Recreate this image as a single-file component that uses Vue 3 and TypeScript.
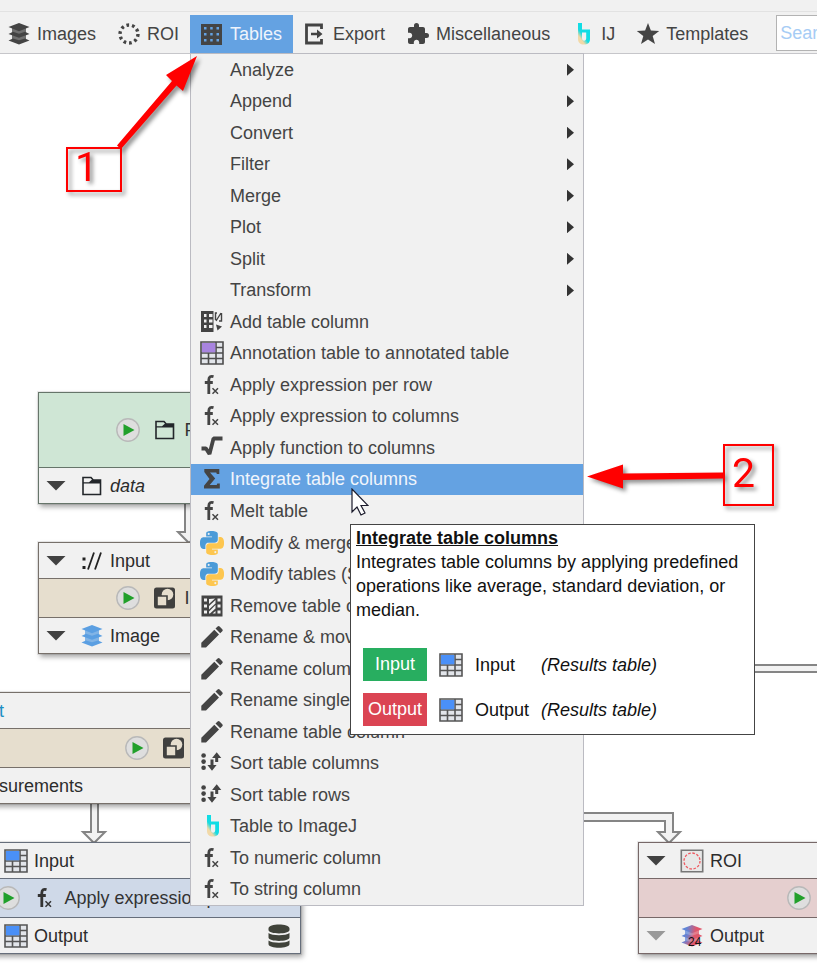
<script setup lang="ts">
import { ref } from 'vue'

interface MenuEntry {
  label: string
  icon?: string
}

interface Slot {
  label: string
  icon: string
  variant?: string
  cached?: boolean
}

interface GraphNode {
  id: string
  title: string
  icon: string
  left: number
  top: number
  width: number
  tone: string
  inputs: Slot[]
  outputs: Slot[]
}

const categories = [
  { label: 'Images', icon: 'layers' },
  { label: 'ROI', icon: 'roi' },
  { label: 'Tables', icon: 'grid' },
  { label: 'Export', icon: 'export' },
  { label: 'Miscellaneous', icon: 'puzzle' },
  { label: 'IJ', icon: 'ij' },
  { label: 'Templates', icon: 'star' },
]

const submenus = ['Analyze', 'Append', 'Convert', 'Filter', 'Merge', 'Plot', 'Split', 'Transform']

const entries: MenuEntry[] = [
  ...submenus.map((label) => ({ label })),
  { label: 'Add table column', icon: 'col-add' },
  { label: 'Annotation table to annotated table', icon: 'table-purple' },
  { label: 'Apply expression per row', icon: 'fx' },
  { label: 'Apply expression to columns', icon: 'fx' },
  { label: 'Apply function to columns', icon: 'sqrt' },
  { label: 'Integrate table columns', icon: 'sigma' },
  { label: 'Melt table', icon: 'fx' },
  { label: 'Modify & merge tables (Script)', icon: 'python' },
  { label: 'Modify tables (Script)', icon: 'python' },
  { label: 'Remove table column', icon: 'col-remove' },
  { label: 'Rename & move columns', icon: 'pencil' },
  { label: 'Rename columns', icon: 'pencil' },
  { label: 'Rename single column', icon: 'pencil' },
  { label: 'Rename table column', icon: 'pencil' },
  { label: 'Sort table columns', icon: 'sort' },
  { label: 'Sort table rows', icon: 'sort' },
  { label: 'Table to ImageJ', icon: 'ij' },
  { label: 'To numeric column', icon: 'fx' },
  { label: 'To string column', icon: 'fx' },
]

const openCategory = ref('Tables')
const selected = ref('Integrate table columns')
const query = ref('')

const nodes: GraphNode[] = [
  { id: 'folder', title: 'Folder', icon: 'folder', left: 38, top: 392, width: 276, tone: 'green', inputs: [], outputs: [{ label: 'data', icon: 'folder', variant: 'italic' }] },
  { id: 'import', title: 'Import image', icon: 'shapes', left: 38, top: 542, width: 330, tone: 'sand', inputs: [{ label: 'Input', icon: 'url' }], outputs: [{ label: 'Image', icon: 'layers-blue' }] },
  { id: 'stats', title: 'Extract statistics', icon: 'shapes', left: -108, top: 692, width: 664, tone: 'sand', inputs: [{ label: 'Input', icon: 'layers-blue', variant: 'linked' }], outputs: [{ label: 'Measurements', icon: 'table-blue' }] },
  { id: 'expr', title: 'Apply expression per row', icon: 'fx', left: -38, top: 842, width: 339, tone: 'blue', inputs: [{ label: 'Input', icon: 'table-blue' }], outputs: [{ label: 'Output', icon: 'table-blue', cached: true }] },
  { id: 'roi', title: 'Filter ROI', icon: 'shapes', left: 638, top: 842, width: 443, tone: 'rose', inputs: [{ label: 'ROI', icon: 'roi-box' }], outputs: [{ label: 'Output', icon: 'layers-24', variant: 'faded' }] },
]

const slots = [
  { kind: 'Input', name: 'Input', type: '(Results table)' },
  { kind: 'Output', name: 'Output', type: '(Results table)' },
]
</script>

<template>
  <div class="app">
    <svg class="defs" aria-hidden="true">
      <defs>
        <linearGradient id="g-ij" x1="0.7" y1="0.1" x2="0.1" y2="0.9">
          <stop offset="0" stop-color="#0adfe8" />
          <stop offset="0.55" stop-color="#17dbe2" />
          <stop offset="0.8" stop-color="#f2d9a8" />
        </linearGradient>
        <linearGradient id="g-24" x1="0" y1="0" x2="1" y2="0.3">
          <stop offset="0.25" stop-color="#5f86d8" />
          <stop offset="0.7" stop-color="#e0566b" />
        </linearGradient>
        <symbol id="layers" viewBox="0 0 24 24">
          <path d="M12 1 22.500 5 12 9.200 1.500 5zM1.500 12l4.500-2.200 6 1.900 6-1.900 4.500 2.200L12 15.800zM1.500 18.600 6 16.400l6 1.900 6-1.900 4.500 2.200L12 22.500z" />
          <path d="M5 6h14v5l-7 2.500L5 11zM5 12.500h14v5L12 20l-7-2.500z" opacity=".75" />
        </symbol>
        <symbol id="roi" viewBox="0 0 24 24">
          <circle cx="12" cy="12" r="9" fill="none" stroke="currentColor" stroke-width="3.400" stroke-dasharray="2.700 2.950" />
        </symbol>
        <symbol id="grid" viewBox="0 0 24 24">
          <path fill-rule="evenodd" d="M1 2h21v21H1zM4 5v2.500h2.500V5zM10.200 5v2.500h2.500V5zM16.500 5v2.500h2.500V5zM4 11v2.500h2.500v-2.500zM10.200 11v2.500h2.500v-2.500zM16.500 11v2.500h2.500v-2.500zM4 17v2.500h2.500v-2.500zM10.200 17v2.500h2.500v-2.500zM16.500 17v2.500h2.500v-2.500z" />
        </symbol>
        <symbol id="export" viewBox="0 0 24 24">
          <path d="M18.500 7V3H3.500v18h15v-4" fill="none" stroke="currentColor" stroke-width="2.800" />
          <path d="M8 10.800h6V7.500l5.500 4.500-5.500 4.500v-3.300H8z" />
        </symbol>
        <symbol id="puzzle" viewBox="0 0 24 24">
          <path d="M20.500 11H19V7c0-1.100-.9-2-2-2h-4V3.500a2.500 2.500 0 0 0-5 0V5H4c-1.100 0-1.990.9-1.990 2v3.800H3.500c1.490 0 2.700 1.210 2.700 2.700s-1.210 2.700-2.700 2.700H2V20c0 1.100.9 2 2 2h3.800v-1.500c0-1.490 1.210-2.700 2.700-2.700s2.700 1.210 2.700 2.700V22H17c1.100 0 2-.9 2-2v-4h1.500a2.500 2.500 0 0 0 0-5z" />
        </symbol>
        <symbol id="ij" viewBox="0 0 24 24">
          <path fill="url(#g-ij)" d="M7 1h4v6.500h8V17c0 4-2.500 5.500-6 5.500-4 0-6-2-6-5.500zM11 10.500V16c0 1.800 1 2.700 2.200 2.700s2-.8 2-2.400v-5.800z" fill-rule="evenodd" />
        </symbol>
        <symbol id="star" viewBox="0 0 24 24">
          <path d="M12 1l2.900 7.600 8.300.3-6.500 5.100 2.300 8-7-4.600L5 22l2.300-8L.8 8.900l8.300-.3z" />
        </symbol>
        <symbol id="col-add" viewBox="0 0 24 24">
          <path fill-rule="evenodd" d="M1 1h12.500v21H1zM4 4v3h2.500V4zM9 4v3h3.500V4zM4 9.500v3h2.500v-3zM9 9.500v3h3.500v-3zM4 15v3h2.500v-3zM9 15v3h3.500v-3z" />
          <path d="M15.500 10V3H17M21.500 3v8H19M16 11l5-8" fill="none" stroke="currentColor" stroke-width="1.400" />
          <path d="M16 14.500l6 2-4.500 4z" />
        </symbol>
        <symbol id="col-remove" viewBox="0 0 24 24">
          <path fill-rule="evenodd" d="M1.500 1.500h21v21h-21zM4 4.500v3h3v-3zM4 10.500v3h3v-3zM4 16.500v3h3v-3zM17.500 4.500v3h3v-3zM17.500 10.500v3h3v-3zM17.500 16.500v3h3v-3zM9 5v5l6-5.500zM9 12v3.500l6.500-6V6zM9 17.500v2h1l5.500-5V11zM12.500 19.500h3V17z" />
        </symbol>
        <symbol id="table-blue" viewBox="0 0 24 24">
          <path d="M1 1h22v22H1z" fill="#e2e5ea" stroke="#555" stroke-width="1.600" />
          <path d="M16 1v22M1 12h22M16 6.500h7M1 17.500h22M8.500 12v11" fill="none" stroke="#555" stroke-width="1.600" />
          <path d="M2 2h13.300v9.300H2z" fill="#4a90f8" />
        </symbol>
        <symbol id="table-purple" viewBox="0 0 24 24">
          <path d="M1 1h22v22H1z" fill="#e2e5ea" stroke="#4d4d4d" stroke-width="1.600" />
          <path d="M16 1v22M1 12h22M16 6.500h7M1 17.500h22M8.500 12v11" fill="none" stroke="#4d4d4d" stroke-width="1.600" />
          <path d="M2 2h13.300v9.300H2z" fill="#a884df" />
        </symbol>
        <symbol id="fx" viewBox="0 0 24 24">
          <path d="M13.500 3.600C10.400 2.700 8.800 4 8.800 7v14M4.800 9.500h8" fill="none" stroke="currentColor" stroke-width="2.800" />
          <path d="M12.500 15.300l5.500 5.400M18 15.300l-5.500 5.400" fill="none" stroke="currentColor" stroke-width="1.500" />
        </symbol>
        <symbol id="sqrt" viewBox="0 0 24 24">
          <path d="M1.500 12.500h4.500L9.500 18 13.500 2.500h9" fill="none" stroke="currentColor" stroke-width="3.800" stroke-linejoin="bevel" />
        </symbol>
        <symbol id="sigma" viewBox="0 0 24 24">
          <path d="M4.300 2h15v5h-2.500l-.5-1.500H10l5.200 6-5.500 6.500h7l.6-1.500h2.500v5H4v-2.800L9.500 12 4.300 5z" />
        </symbol>
        <path id="snake" d="M14.250.18l.9.2.73.26.59.3.45.32.34.34.25.34.16.33.1.3.04.26.02.2-.01.13V8.500l-.05.63-.13.55-.21.46-.26.38-.3.31-.33.25-.35.19-.35.14-.33.1-.3.07-.26.04-.21.02H8.770l-.69.05-.59.14-.5.22-.41.27-.33.32-.27.35-.2.36-.15.37-.1.35-.07.32-.04.27-.02.21v3.060H3.170l-.21-.03-.28-.07-.32-.12-.35-.18-.36-.26-.36-.36-.35-.46-.32-.59-.28-.73-.21-.88-.14-1.050-.05-1.230.06-1.220.16-1.040.24-.87.32-.71.36-.57.4-.44.42-.33.42-.24.4-.16.36-.1.32-.05.24-.01h.16l.06.01h8.160v-.83H6.180l-.01-2.750-.02-.37.05-.34.11-.31.17-.28.25-.26.31-.23.38-.2.44-.18.51-.15.58-.12.64-.1.71-.06.77-.04.84-.02 1.270.05zm-6.300 1.980l-.23.33-.08.41.08.41.23.34.33.22.41.09.41-.09.33-.22.23-.34.08-.41-.08-.41-.23-.33-.33-.22-.41-.09-.41.09z" />
        <symbol id="python" viewBox="0 0 24 24">
          <use href="#snake" fill="#4b9bd8" />
          <use href="#snake" fill="#fdc64f" transform="rotate(180 12 12)" />
        </symbol>
        <symbol id="pencil" viewBox="0 0 24 24">
          <path d="M1.300 17.800 14.300 4.800l4.700 4.700L6 22.500H1.300zM15.500 3.600l2.100-2.100q1-1 2 0L22.300 4.200q1 1 0 2L20.200 8.300z" />
        </symbol>
        <symbol id="sort" viewBox="0 0 24 24">
          <circle cx="3.600" cy="4.500" r="2.300" /><circle cx="3.600" cy="10.600" r="2.300" /><circle cx="3.600" cy="16.800" r="2.300" />
          <path d="M10.500 8.500h3v5.500h3.100L12 19.800 7.400 14h3.100zM15.200 11V7h-3.100l4.600-5.800L21.300 7H18.200V11z" />
        </symbol>
        <symbol id="folder" viewBox="0 0 24 24">
          <path d="M3 3.500h8l2.200 2.500H20.500V20.500H3z" fill="none" stroke="#22262a" stroke-width="1.600" />
          <path d="M3 8.300h6L11.500 6H20.500v3.500H3z" fill="#22262a" />
        </symbol>
        <symbol id="url" viewBox="0 0 24 24">
          <path d="M2.500 8.500h3v3h-3zM2.500 17h3v3h-3z" fill="#222" />
          <path d="M8 20.500 14 3.500M15 20.500 21 3.500" stroke="#222" stroke-width="1.800" />
        </symbol>
        <symbol id="shapes" viewBox="0 0 24 24">
          <rect x="1" y="1.500" width="21" height="21" rx="2.500" fill="#40403f" />
          <circle cx="14.500" cy="8.500" r="5.800" fill="#e6dece" />
          <path d="M4 10h10v10H4z" fill="#e6dece" stroke="#40403f" stroke-width="1.600" />
        </symbol>
        <symbol id="roi-box" viewBox="0 0 24 24">
          <path d="M1.300 1.300h21.400v21.400H1.300z" fill="#e8e8e8" stroke="#777" stroke-width="1.600" />
          <circle cx="12" cy="12" r="8" fill="none" stroke="#ee5a62" stroke-width="1.300" stroke-dasharray="2.600 1.600" />
        </symbol>
        <symbol id="database" viewBox="0 0 24 24">
          <path d="M1.500 4.500C1.500-.7 22.500-.7 22.500 4.500V6c0 4.500-21 4.500-21 0zM1.500 9c3.500 3 17.500 3 21 0v4.500c0 4.500-21 4.500-21 0zM1.500 16.500c3.500 3 17.500 3 21 0V20c0 5-21 5-21 0z" fill="#40433a" />
        </symbol>
      </defs>
    </svg>

    <header class="top">
      <nav class="menubar" aria-label="Node categories">
        <button
          v-for="c in categories"
          :key="c.label"
          type="button"
          class="category"
          :class="{ open: c.label === openCategory }"
          @click="openCategory = c.label"
        >
          <svg class="icon"><use :href="'#' + c.icon" /></svg>{{ c.label }}
        </button>
        <input v-model="query" class="search" type="search" placeholder="Search ..." aria-label="Search" />
      </nav>
    </header>

    <main class="canvas">
      <svg class="edges" aria-hidden="true">
        <path d="M185 504V532H178L189 543 200 532H193V504" />
        <path d="M91 804V832H83L94 843 105 832H98V804" />
        <path d="M500 813H673V832H680L669 843 658 832H665V821H500" />
        <path d="M700 665H900V672H700" />
      </svg>

      <article
        v-for="n in nodes"
        :key="n.id"
        class="node"
        :class="n.tone"
        :style="{ left: n.left + 'px', top: n.top + 'px', width: n.width + 'px' }"
      >
        <div v-for="s in n.inputs" :key="s.label" class="slot" :class="s.variant">
          <span class="toggle"></span>
          <svg v-if="s.icon === 'layers-blue'" class="icon blue-icon"><use href="#layers" /></svg>
          <svg v-else class="icon"><use :href="'#' + s.icon" /></svg>
          <span>{{ s.label }}</span>
        </div>
        <div class="title" :class="{ tall: !n.inputs.length }">
          <button type="button" class="run" :aria-label="'Run ' + n.title">
            <svg class="icon" viewBox="0 0 24 24">
              <circle cx="12" cy="12" r="11.200" fill="#dedede" stroke="#b9b9b9" stroke-width="1.400" />
              <path d="M7.500 6 18.500 12 7.500 18z" fill="#21a02b" />
            </svg>
          </button>
          <svg class="icon"><use :href="'#' + n.icon" /></svg>
          <span>{{ n.title }}</span>
        </div>
        <div v-for="s in n.outputs" :key="s.label" class="slot" :class="s.variant">
          <span class="toggle"></span>
          <svg v-if="s.icon === 'layers-blue'" class="icon blue-icon"><use href="#layers" /></svg>
          <svg v-else-if="s.icon === 'layers-24'" class="icon" viewBox="0 0 24 24">
            <g fill="url(#g-24)"><use href="#layers" /></g>
            <text x="8" y="22" class="badge">24</text>
          </svg>
          <svg v-else class="icon"><use :href="'#' + s.icon" /></svg>
          <span>{{ s.label }}</span>
          <svg v-if="s.cached" class="icon cached"><use href="#database" /></svg>
        </div>
      </article>
    </main>

    <div class="menu" role="menu" aria-label="Tables">
      <button
        v-for="e in entries"
        :key="e.label"
        type="button"
        role="menuitem"
        class="entry"
        :class="{ selected: e.label === selected }"
        @mouseenter="selected = e.label"
      >
        <svg class="icon"><use v-if="e.icon" :href="'#' + e.icon" /></svg>
        <span>{{ e.label }}</span>
        <span v-if="!e.icon" class="more"></span>
      </button>
    </div>

    <aside class="tooltip" role="tooltip">
      <h2>Integrate table columns</h2>
      <p>Integrates table columns by applying predefined operations like average, standard deviation, or median.</p>
      <div class="slots">
        <template v-for="s in slots" :key="s.kind">
          <span class="tag" :class="s.kind.toLowerCase()">{{ s.kind }}</span>
          <svg class="icon"><use href="#table-blue" /></svg>
          <span>{{ s.name }}</span>
          <em>{{ s.type }}</em>
        </template>
      </div>
    </aside>

    <svg class="cursor" viewBox="0 0 18 28" aria-hidden="true">
      <path d="M1 1V24l5-5 4 8 4-2-4-7.500h7z" fill="#fff" stroke="#1c1c2c" stroke-width="1.200" />
    </svg>

    <svg class="arrows" aria-hidden="true">
      <path d="M197 56 183 91 176.500 85.500 121 149 117 145.500 172 81 166 75z" />
      <path d="M587 476.500 623 464.500V473.500L723 472.500V478.500L623 480V488.500z" />
    </svg>
    <div class="callout first">1</div>
    <div class="callout second">2</div>
  </div>
</template>

<style>
body {
  background: #fff;
}
</style>

<style scoped>
.app {
  position: relative;
  display: flex;
  flex-direction: column;
  min-height: 100vh;
  overflow: hidden;
  font: 18px/24px "Liberation Sans", Arial, sans-serif;
  color: #444;
}

button {
  border: 0;
  padding: 0;
  background: none;
  font: inherit;
  color: inherit;
}

.defs {
  position: absolute;
  width: 0;
  height: 0;
}

.icon {
  display: block;
  flex: none;
  width: 24px;
  height: 24px;
  fill: currentColor;
}

.top {
  padding-top: 11px;
  background: #f1f1f1;
  border-bottom: 1px solid #c6c6ca;
}

.menubar {
  display: flex;
  align-items: stretch;
  height: 38px;
  margin-left: -3px;
  padding-top: 3px;
  border-top: 1px solid #e2e2e2;
}

.category {
  display: flex;
  flex: none;
  align-items: center;
  gap: 6px;
  padding: 0 11px 0 10px;
}

.category.open {
  background: #64a2e2;
  color: #eef4fc;
}

.category.open .icon {
  color: #444;
}

.search {
  flex: 1 0 200px;
  box-sizing: border-box;
  height: 36px;
  margin-left: 17px;
  padding: 0 3px;
  border: 1px solid #b3b3b3;
  background: #fff;
  font: inherit;
  outline: 0;
}

.search::placeholder {
  color: #a6ccf5;
  opacity: 1;
}

.canvas {
  flex: 1;
}

.edges,
.arrows {
  position: absolute;
  top: 0;
  left: 0;
  width: 100%;
  height: 100%;
  pointer-events: none;
}

.edges {
  fill: #f2f2f2;
  stroke: #858585;
  stroke-width: 2;
}

.node {
  position: absolute;
  box-sizing: border-box;
  border: 1px solid var(--line);
  background: #f1f1f1;
  box-shadow: 2px 3px 5px rgba(0, 0, 0, 0.35), 0 0 0 1px rgba(0, 0, 0, 0.08);
  color: #2c2c2c;
}

.node > * + * {
  border-top: 1px solid var(--line);
}

.green { --line: #66756a; --tone: #cfe6d5; }
.sand { --line: #77706a; --tone: #e6dece; }
.blue { --line: #666e7b; --tone: #cfd9e8; }
.rose { --line: #776868; --tone: #e5cfcf; }

.slot {
  display: flex;
  align-items: center;
  gap: 6px;
  height: 35px;
  padding: 0 9px 0 7px;
}

.toggle {
  width: 20px;
  height: 10px;
  margin-right: 8px;
  background: #414141;
  clip-path: polygon(0 0, 100% 0, 50% 100%);
}

.faded .toggle {
  background: #999;
}

.italic {
  font-style: italic;
}

.linked {
  color: #1d8fc4;
}

.blue-icon {
  color: #5b9fe2;
}

.badge {
  font: 12px "Liberation Sans", Arial, sans-serif;
  fill: #111;
}

.cached {
  margin-left: auto;
}

.title {
  display: flex;
  align-items: center;
  justify-content: center;
  gap: 7px;
  height: 38px;
  background: var(--tone);
  color: #333;
}

.title.tall {
  height: 74px;
}

.run {
  margin-right: 6px;
}

.menu {
  position: absolute;
  top: 53px;
  left: 190px;
  display: grid;
  grid-auto-rows: 1fr;
  box-sizing: border-box;
  width: 394px;
  height: 853px;
  border: 1px solid #bbbbc2;
  background: #f1f1f1;
}

.entry {
  display: flex;
  align-items: center;
  gap: 6px;
  padding: 0 9px;
  text-align: left;
}

.entry.selected {
  background: #64a2e2;
  color: #f0f5fc;
}

.entry.selected .icon {
  color: #444;
}

.more {
  width: 7px;
  height: 12px;
  margin-left: auto;
  background: #333;
  clip-path: polygon(0 0, 100% 50%, 0 100%);
}

.tooltip {
  position: absolute;
  top: 524px;
  left: 350px;
  box-sizing: border-box;
  width: 405px;
  padding: 1px 3px 8px 5px;
  border: 1px solid #444;
  background: #fff;
  color: #111;
}

.tooltip h2,
.tooltip p {
  margin: 0;
  font-size: 18px;
}

.tooltip h2 {
  text-decoration: underline;
}

.slots {
  display: grid;
  grid-template-columns: 64px 24px auto auto;
  grid-auto-rows: 33px;
  align-items: center;
  justify-content: start;
  gap: 12px;
  margin: 26px 0 0 7px;
}

.tag {
  color: #fff;
  line-height: 33px;
  text-align: center;
}

.tag.input {
  background: #28ae60;
}

.tag.output {
  background: #db4453;
}

.cursor {
  position: absolute;
  top: 488px;
  left: 351px;
  width: 18px;
  height: 28px;
}

.arrows,
.callout {
  filter: drop-shadow(3px 3px 2px rgba(0, 0, 0, 0.45));
}

.arrows {
  fill: #f00;
}

.callout {
  position: absolute;
  display: flex;
  align-items: center;
  box-sizing: border-box;
  padding: 0 7px 5px;
  border: 2px solid #f00;
  color: #f00;
  font-family: Roboto, "Liberation Sans", sans-serif;
  font-size: 41px;
  line-height: 40px;
}

.first {
  top: 147px;
  left: 66px;
  width: 56px;
  height: 45px;
}

.second {
  top: 444px;
  left: 723px;
  width: 51px;
  height: 62px;
}
</style>
